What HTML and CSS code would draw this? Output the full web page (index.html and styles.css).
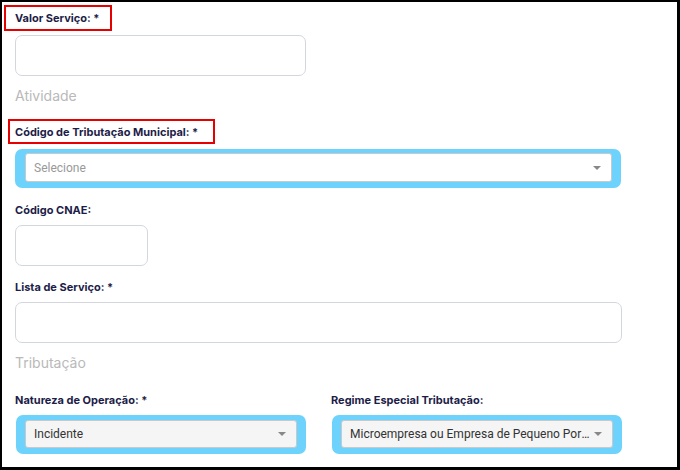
FILE: index.html
```html
<!DOCTYPE html>
<html lang="pt-BR">
<head>
    <meta charset="UTF-8">
    <meta name="viewport" content="width=device-width, initial-scale=1.0">
    <title>Serviço</title>

    <link rel="stylesheet" href="styles.css">
</head>
<body>

<div class="page">

    <div class="field">
        <label class="lbl mark" for="valorServico">Valor Serviço: *</label>
        <input class="inp inp-md" id="valorServico" type="text">
    </div>

    <h3 class="section">Atividade</h3>

    <div class="field field-sel">
        <label class="lbl mark mark-lg">Código de Tributação Municipal: *</label>
        <div class="sel-wrap">
            <div class="sel">
                <span class="sel-text placeholder">Selecione</span>
                <span class="sel-arrow"></span>
            </div>
        </div>
    </div>

    <div class="field">
        <label class="lbl" for="cnae">Código CNAE:</label>
        <input class="inp inp-sm" id="cnae" type="text">
    </div>

    <div class="field">
        <label class="lbl" for="listaServico">Lista de Serviço: *</label>
        <input class="inp" id="listaServico" type="text">
    </div>

    <h3 class="section">Tributação</h3>

    <div class="cols">
        <div class="field">
            <label class="lbl">Natureza de Operação: *</label>
            <div class="sel-wrap">
                <div class="sel sel-gray">
                    <span class="sel-text">Incidente</span>
                    <span class="sel-arrow"></span>
                </div>
            </div>
        </div>
        <div class="field">
            <label class="lbl">Regime Especial Tributação:</label>
            <div class="sel-wrap">
                <div class="sel sel-gray">
                    <span class="sel-text">Microempresa ou Empresa de Pequeno Porte (ME EPP)</span>
                    <span class="sel-arrow"></span>
                </div>
            </div>
        </div>
    </div>

</div>

</body>
</html>
```

FILE: styles.css
```css
html, body {
    margin: 0;
    padding: 0;
    background: #ffffff;
}

.page {
    box-sizing: border-box;
    height: 470px;
    overflow: hidden;
    border-style: solid;
    border-color: #000000;
    border-width: 2px 3px 3px 2px;
    padding: 9px 0 0 13px;
    font-family: Inter, "Noto Sans", sans-serif;
}

.field {
    width: 607px;
    margin-bottom: 14px;
}

.field-sel {
    margin-bottom: 15px;
}

.lbl {
    display: block;
    font-size: 11px;
    line-height: 14px;
    font-weight: 700;
    color: #1d1d48;
    margin-bottom: 8px;
}

/* caixa vermelha de destaque */
.mark {
    width: fit-content;
    border: 2px solid #e60000;
    padding: 4px 11px 4px 9px;
    margin: -6px 0 4px -11px;
}

.mark-lg {
    margin-top: -7px;
    margin-left: -7px;
    margin-bottom: 5px;
    padding: 4px 15px 3px 5px;
}

.inp {
    display: block;
    box-sizing: border-box;
    width: 607px;
    height: 41px;
    border: 1px solid #d3d7dd;
    border-radius: 7px;
    background: #ffffff;
    outline: none;
}

.inp-md {
    width: 291px;
}

.inp-sm {
    width: 133px;
}

.section {
    margin: -3px 0 22px;
    font-size: 14px;
    line-height: 17px;
    font-weight: 400;
    color: #b9b9b9;
}

.sel-wrap {
    box-sizing: border-box;
    width: 606px;
    padding: 4px 9px 6px 10px;
    background: #6dd3fc;
    border-radius: 7px;
}

.sel {
    box-sizing: border-box;
    height: 29px;
    display: flex;
    align-items: center;
    padding: 0 10px 0 8px;
    border: 1px solid #c9c9c9;
    border-radius: 3px;
    background: #ffffff;
    font-family: Roboto, "Liberation Sans", sans-serif;
    font-size: 12px;
    color: #333333;
}

.sel-gray {
    background: #f5f5f5;
}

.sel-text {
    flex: 1;
    min-width: 0;
    white-space: nowrap;
    overflow: hidden;
    text-overflow: ellipsis;
    padding-right: 4px;
}

.placeholder {
    color: #999999;
}

.sel-arrow {
    width: 0;
    height: 0;
    border-left: 4px solid transparent;
    border-right: 4px solid transparent;
    border-top: 4px solid #888888;
}

.cols {
    display: grid;
    grid-template-columns: 290px 290px;
    column-gap: 26px;
}

.cols .field {
    width: auto;
}

.cols .sel-wrap {
    width: 290px;
    padding: 5px 9px 6px 9px;
    margin-left: 1px;
}

.cols .sel {
    height: 28px;
}
```
